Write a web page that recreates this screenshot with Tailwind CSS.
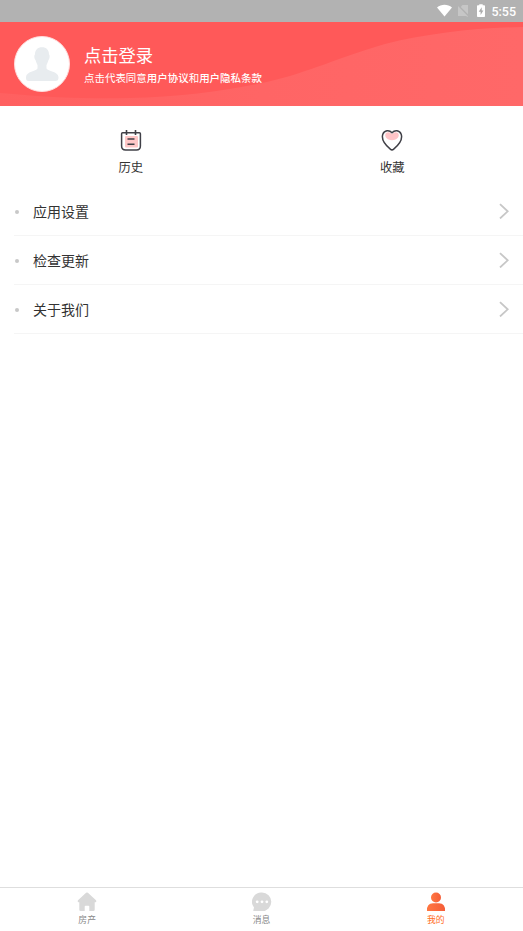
<!DOCTYPE html>
<html lang="zh-CN">
<head>
<meta charset="UTF-8">
<meta name="viewport" content="width=device-width, initial-scale=1">
<title>我的</title>
<script src="https://cdn.jsdelivr.net/npm/@tailwindcss/browser@4"></script>
</head>
<body class="flex h-screen flex-col overflow-hidden bg-white font-['Noto_Sans_CJK_SC',sans-serif] text-[#333]">
  <div class="flex h-[22px] shrink-0 items-center justify-end bg-[#b2b2b2] pr-[7px] text-white">
    <svg class="mr-[6px] h-[22px] w-[15px]" viewBox="0 0 15 22" fill="currentColor"><path d="M0 7.4C4.2 4 10.8 4 15 7.4L7.5 16.5Z"/></svg>
    <svg class="mr-[9px] h-[22px] w-[10px] text-[#c6c6c6]" viewBox="0 0 10 22" fill="currentColor"><path d="M4.5 5H10V14.2L2.8 7Z"/><path d="M0 6L10 16.2L9.3 17L8.2 16H0V8.2L0 7Z"/></svg>
    <svg class="mr-[6px] h-[22px] w-[8px]" viewBox="0 0 8 22"><path fill="currentColor" d="M2.3 4.2H5.7V5.3H7.2Q8 5.3 8 6.1V16.2Q8 17 7.2 17H.8Q0 17 0 16.2V6.1Q0 5.3.8 5.3H2.3Z"/><path fill="#aaa" d="M4.7 7.3L1.7 11.7H3.6V15L6.4 10.5H4.7Z"/></svg>
    <span class="pt-[2px] font-['Roboto',sans-serif] text-[12.5px] leading-5 font-medium">5:55</span>
  </div>

  <header class="relative flex h-[84px] shrink-0 items-center bg-[#ff5959] pl-[14px] text-white">
    <svg class="absolute inset-0 h-[84px] w-full" viewBox="0 0 523 84" preserveAspectRatio="none">
      <defs><linearGradient id="wave"><stop offset="0" stop-color="#ff6060"/><stop offset=".5" stop-color="#ff6565"/><stop offset="1" stop-color="#ff6868"/></linearGradient></defs>
      <path fill="url(#wave)" d="M0 71C55 76 93 77 130 76C180 75 225 69 267 60C310 50 340 35 385 22C430 11 475 6 523 5V84H0Z"/>
    </svg>
    <div class="relative h-14 w-14 overflow-hidden rounded-full border border-[#ffdcdc] bg-white">
      <svg class="h-full w-full" viewBox="0 0 54 54" fill="#e8ecef"><path d="M27 10.3C31.5 10.3 34 13 34 17.5C35.1 18 34.7 22 33.5 23C32.8 25.5 32 27 31.5 28V31.5C33 34.3 43 34.3 43.5 40C43.5 43.5 42.5 44 40 44H14C11.5 44 11 43 11 40C11.5 34.3 21 34.3 22.5 31.5V28C22 27 21.2 25.5 20.5 23C19.3 22 18.9 18 20 17.5C20 13 22.5 10.3 27 10.3Z"/></svg>
    </div>
    <div class="relative ml-[14px] flex flex-col">
      <h1 class="text-[17.3px] leading-[24px] font-normal">点击登录</h1>
      <p class="mt-[3px] text-[10.48px] leading-4">点击代表同意<span class="font-medium">用户协议</span>和<span class="font-medium">用户隐私条款</span></p>
    </div>
  </header>

  <section class="grid h-[81px] shrink-0 grid-cols-2 pt-[22px]">
    <div class="flex flex-col items-center">
      <svg class="h-6 w-6" viewBox="0 0 24 24" fill="none"><rect x="6" y="8" width="13" height="11.5" rx="1" fill="#ffc7c7"/><path d="M3.6 4.8H20.4Q21.4 4.8 21.4 5.8V18Q21.4 22 17.4 22H6.6Q2.6 22 2.6 18V5.8Q2.6 4.8 3.6 4.8Z" stroke="#404047" stroke-width="1.5"/><path d="M7.5 2V7M16.5 2V7M8.5 11H15.5M8.5 16.3H15.5" stroke="#404047" stroke-width="1.6"/></svg>
      <span class="mt-[6px] text-[12.3px] leading-[18px]">历史</span>
    </div>
    <div class="flex flex-col items-center">
      <svg class="h-6 w-6" viewBox="0 0 24 24" fill="none"><path d="M5.3 6.5C6 3.6 9.8 3.7 12 6.2C14.2 3.7 18 3.6 18.7 6.5C19.2 10 16 12 12 12.2C8 12 4.8 10 5.3 6.5Z" fill="#ffc4c7"/><path d="M12 4.7C9.2 1.7 4.4 2.2 2.8 6.2C1.1 11.5 5.2 17 10.3 21.2Q12 22.6 13.7 21.2C18.8 17 22.9 11.5 21.2 6.2C19.6 2.2 14.8 1.7 12 4.7Z" stroke="#404047" stroke-width="1.5" stroke-linejoin="round"/></svg>
      <span class="mt-[6px] text-[12.3px] leading-[18px]">收藏</span>
    </div>
  </section>

  <main class="flex-1 pl-[14px]">
    <div class="flex h-[49px] items-center border-b border-[#f5f5f5] pr-[14px]">
      <i class="mt-px ml-px h-1 w-1 rounded-full bg-[#c8c8c8]"></i><span class="ml-[14px] flex-1 text-[14px] leading-5">应用设置</span>
      <svg class="h-4 w-[10px]" viewBox="0 0 10 16" fill="none" stroke="#c7c7c7" stroke-width="1.8"><path d="M1 1.1L8.7 8.3L1 15.5"/></svg>
    </div>
    <div class="flex h-[49px] items-center border-b border-[#f5f5f5] pr-[14px]">
      <i class="mt-px ml-px h-1 w-1 rounded-full bg-[#c8c8c8]"></i><span class="ml-[14px] flex-1 text-[14px] leading-5">检查更新</span>
      <svg class="h-4 w-[10px]" viewBox="0 0 10 16" fill="none" stroke="#c7c7c7" stroke-width="1.8"><path d="M1 1.1L8.7 8.3L1 15.5"/></svg>
    </div>
    <div class="flex h-[49px] items-center border-b border-[#f5f5f5] pr-[14px]">
      <i class="mt-px ml-px h-1 w-1 rounded-full bg-[#c8c8c8]"></i><span class="ml-[14px] flex-1 text-[14px] leading-5">关于我们</span>
      <svg class="h-4 w-[10px]" viewBox="0 0 10 16" fill="none" stroke="#c7c7c7" stroke-width="1.8"><path d="M1 1.1L8.7 8.3L1 15.5"/></svg>
    </div>
  </main>

  <nav class="grid h-11 shrink-0 grid-cols-3 border-t border-[#dedede] text-[8.8px] leading-3 text-[#888]">
    <div class="flex flex-col items-center pt-[4px]">
      <svg class="h-5 w-5" viewBox="0 0 20 20" fill="#d9d9d9"><path d="M9.1.8Q10 0 10.9.8L19 8.2Q20 9.3 18.7 10.2H17.7V17.7Q17.7 19 16.4 19H12.3V14.5Q12.3 13.7 11.5 13.7H8.5Q7.7 13.7 7.7 14.5V19H3.6Q2.3 19 2.3 17.7V10.2H1.3Q0 9.3 1 8.2Z"/></svg>
      <span class="mt-[2px]">房产</span>
    </div>
    <div class="flex flex-col items-center pt-[4px]">
      <svg class="ml-px h-5 w-5" viewBox="0 0 20 20"><path fill="#d9d9d9" d="M10 .5A9.3 9.3 0 1 1 10 19.1H2Q1 19 1.4 18L2 15.5A9.3 9.3 0 0 1 10 .5Z"/><g fill="#fff"><circle cx="5.2" cy="9.8" r="1.4"/><circle cx="10" cy="9.8" r="1.4"/><circle cx="14.8" cy="9.8" r="1.4"/></g></svg>
      <span class="mt-[2px]">消息</span>
    </div>
    <div class="flex flex-col items-center pt-[4px] text-[#ff6d25]">
      <svg class="h-5 w-5" viewBox="0 0 20 20"><defs><linearGradient id="person" x1="0" x2="1"><stop stop-color="#ff7742"/><stop offset="1" stop-color="#f55d38"/></linearGradient></defs><g fill="url(#person)"><circle cx="10" cy="5.5" r="5"/><path d="M1 19Q.6 11.3 7 11.3H13Q19.4 11.3 19 19Z"/></g></svg>
      <span class="mt-[2px]">我的</span>
    </div>
  </nav>
</body>
</html>
